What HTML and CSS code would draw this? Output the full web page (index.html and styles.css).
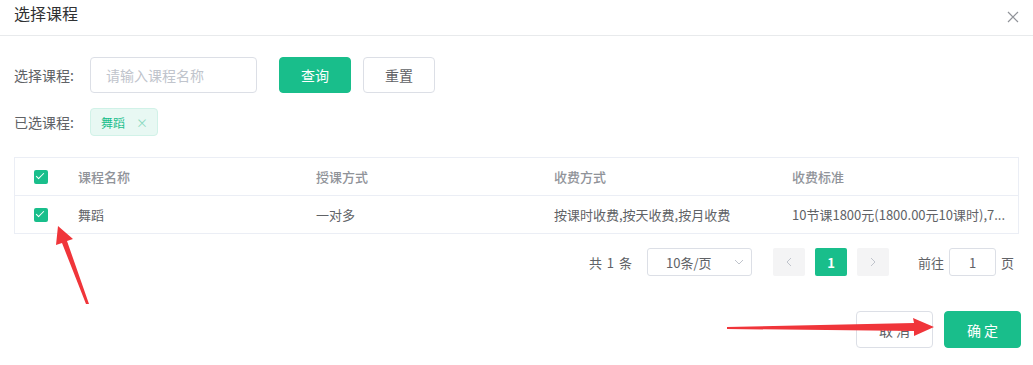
FILE: index.html
```html
<!DOCTYPE html>
<html lang="zh-CN">
<head>
  <meta charset="UTF-8" />
  <title>选择课程</title>
  <link rel="stylesheet" href="styles.css">
</head>
<body>
  <div class="dialog">
    <div class="dialog-header">
      <span class="dialog-title">选择课程</span>
      <span class="close">
        <svg width="12" height="12" viewBox="0 0 12 12"><path d="M1 1L11 11M11 1L1 11" stroke="#909399" stroke-width="1.2" fill="none"/></svg>
      </span>
    </div>

    <div class="dialog-body">
      <div class="form-row">
        <label class="form-label">选择课程:</label>
        <input class="text-input" placeholder="请输入课程名称" />
        <button class="btn btn-primary btn-query">查询</button>
        <button class="btn btn-reset">重置</button>
      </div>

      <div class="form-row selected-row">
        <label class="form-label">已选课程:</label>
        <span class="tag">舞蹈<span class="tag-close">×</span></span>
      </div>

      <div class="table">
        <div class="tr th">
          <div class="td col-check"><span class="checkbox"></span></div>
          <div class="td">课程名称</div>
          <div class="td">授课方式</div>
          <div class="td">收费方式</div>
          <div class="td">收费标准</div>
        </div>
        <div class="tr">
          <div class="td col-check"><span class="checkbox"></span></div>
          <div class="td">舞蹈</div>
          <div class="td">一对多</div>
          <div class="td">按课时收费,按天收费,按月收费</div>
          <div class="td ellipsis">10节课1800元(1800.00元10课时),7...</div>
        </div>
      </div>

      <div class="pager">
        <span class="pager-total">共 1 条</span>
        <span class="pager-size">10条/页
          <svg class="caret" width="10" height="6" viewBox="0 0 10 6"><path d="M1 1L5 5L9 1" stroke="#c0c4cc" fill="none"/></svg>
        </span>
        <span class="pager-btn">
          <svg width="6" height="10" viewBox="0 0 6 10"><path d="M5 1L1 5L5 9" stroke="#c0c4cc" fill="none"/></svg>
        </span>
        <span class="pager-btn active">1</span>
        <span class="pager-btn">
          <svg width="6" height="10" viewBox="0 0 6 10"><path d="M1 1L5 5L1 9" stroke="#c0c4cc" fill="none"/></svg>
        </span>
        <span class="pager-jump">前往<span class="jump-input">1</span>页</span>
      </div>
    </div>

    <div class="dialog-footer">
      <button class="btn btn-cancel">取 消</button>
      <button class="btn btn-primary btn-ok">确 定</button>
    </div>

    <svg class="arrows" width="1033" height="365" viewBox="0 0 1033 365">
      <polygon fill="#f0353a" points="58,226 73,239 67,241 89,304 86,304 62,243 56,245"/>
      <polygon fill="#f0353a" points="727,327 914,323 913,318 934,327 914,336 914,331 727,329"/>
    </svg>
  </div>
</body>
</html>
```

FILE: styles.css
```css
* {
  box-sizing: border-box;
}
body {
  margin: 0;
  background: #fff;
  font-family: "Noto Sans CJK SC", "Noto Sans", sans-serif;
  font-size: 13px;
  color: #606266;
}
.dialog {
  position: relative;
  width: 1033px;
  height: 365px;
}
.dialog-header {
  height: 36px;
  padding: 0 14px;
  display: flex;
  justify-content: space-between;
  align-items: flex-start;
  border-bottom: 1px solid #e8eaec;
}
.dialog-title {
  font-size: 16px;
  line-height: 26px;
  color: #303133;
}
.close {
  padding-top: 8px;
}
.dialog-body {
  padding: 21px 14px 0 14px;
}
.form-row {
  display: flex;
  align-items: center;
}
.form-label {
  width: 76px;
  font-size: 14px;
  color: #606266;
}
.text-input {
  width: 167px;
  height: 36px;
  padding: 0 15px;
  border: 1px solid #dcdfe6;
  border-radius: 4px;
  font-family: inherit;
  font-size: 14px;
  color: #606266;
}
.text-input::placeholder {
  color: #c0c4cc;
}
.btn {
  height: 36px;
  width: 72px;
  border: 1px solid #dcdfe6;
  border-radius: 4px;
  background: #fff;
  font-family: inherit;
  font-size: 14px;
  color: #606266;
  padding: 0;
  cursor: pointer;
}
.btn-primary {
  background: #19be8b;
  border-color: #19be8b;
  color: #fff;
}
.btn-query {
  margin-left: 22px;
}
.btn-reset {
  margin-left: 12px;
}
.selected-row {
  margin-top: 15px;
}
.tag {
  display: inline-flex;
  align-items: center;
  height: 28px;
  padding: 0 9px 0 10px;
  background: #e8f8f3;
  border: 1px solid #d1f2e8;
  border-radius: 4px;
  color: #19be8b;
  font-size: 12px;
}
.tag-close {
  margin-left: 11px;
  color: #8ad8c0;
  font-size: 12px;
}
.table {
  margin-top: 21px;
  border: 1px solid #ebeef5;
  border-bottom: none;
}
.tr {
  display: flex;
  height: 38px;
  align-items: center;
  border-bottom: 1px solid #ebeef5;
}
.td {
  width: 238px;
  padding: 0 14px;
  font-size: 13px;
  color: #606266;
  white-space: nowrap;
}
.th .td {
  color: #909399;
  font-weight: 500;
}
.td.col-check {
  width: 49px;
  padding: 0 0 0 19px;
  display: flex;
}
.td.ellipsis {
  flex: 1;
  overflow: hidden;
}
.checkbox {
  position: relative;
  display: inline-block;
  width: 14px;
  height: 14px;
  border-radius: 2px;
  background: #19be8b;
}
.checkbox::after {
  content: "";
  position: absolute;
  left: 4px;
  top: 1px;
  width: 3px;
  height: 7px;
  border: solid #fff;
  border-width: 0 1px 1px 0;
  transform: rotate(45deg);
}
.pager {
  margin-top: 14px;
  display: flex;
  justify-content: flex-end;
  align-items: center;
  height: 28px;
  padding-right: 5px;
  font-size: 13px;
  color: #606266;
}
.pager-total {
  word-spacing: 2px;
}
.pager-size {
  margin-left: 15px;
  width: 105px;
  height: 28px;
  border: 1px solid #dcdfe6;
  border-radius: 3px;
  display: flex;
  align-items: center;
  padding: 0 0 0 18px;
  gap: 22px;
}
.pager-btn {
  width: 32px;
  height: 28px;
  margin-left: 10px;
  background: #f4f4f5;
  border-radius: 2px;
  display: flex;
  align-items: center;
  justify-content: center;
  font-weight: bold;
}
.pager-size + .pager-btn {
  margin-left: 21px;
}
.pager-btn.active {
  background: #19be8b;
  color: #fff;
}
.pager-jump {
  margin-left: 29px;
  display: flex;
  align-items: center;
}
.jump-input {
  width: 47px;
  height: 28px;
  margin: 0 5px;
  border: 1px solid #dcdfe6;
  border-radius: 3px;
  display: flex;
  align-items: center;
  justify-content: center;
}
.dialog-footer {
  margin-top: 35px;
  padding: 0 12px;
  display: flex;
  justify-content: flex-end;
  gap: 11px;
}
.dialog-footer .btn {
  width: 77px;
  height: 37px;
}
.arrows {
  position: absolute;
  left: 0;
  top: 0;
  pointer-events: none;
}
```
